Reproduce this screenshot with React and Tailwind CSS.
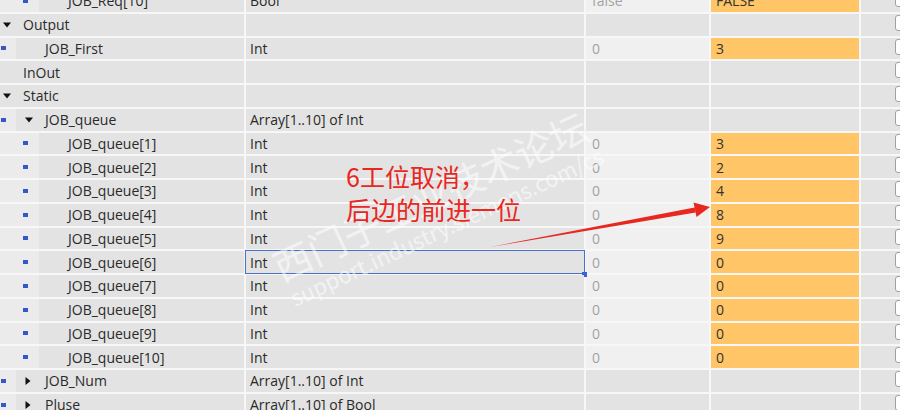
import React from 'react'

const rows = [
  { name: 'JOB_Req[10]', level: 2, type: 'Bool', def: 'false', start: 'FALSE' },
  { name: 'Output', level: 0, open: true },
  { name: 'JOB_First', level: 1, type: 'Int', def: '0', start: '3' },
  { name: 'InOut', level: 0 },
  { name: 'Static', level: 0, open: true },
  { name: 'JOB_queue', level: 1, open: true, type: 'Array[1..10] of Int' },
  ...[3, 2, 4, 8, 9, 0, 0, 0, 0, 0].map((v, i) => ({
    name: `JOB_queue[${i + 1}]`,
    level: 2,
    type: 'Int',
    def: '0',
    start: String(v),
    selected: i === 5,
  })),
  { name: 'JOB_Num', level: 1, open: false, type: 'Array[1..10] of Int' },
  { name: 'Pluse', level: 1, open: false, type: 'Array[1..10] of Bool' },
]

function Tri({ open }) {
  if (open) {
    return (
      <svg width="8" height="6" viewBox="0 0 8 6" className="shrink-0">
        <path d="M0 0.5 L8 0.5 L4 5.5 Z" fill="#111" />
      </svg>
    )
  }
  return (
    <svg width="6" height="8" viewBox="0 0 6 8" className="shrink-0">
      <path d="M0.5 0 L5.5 4 L0.5 8 Z" fill="#111" />
    </svg>
  )
}

function NameCell({ row }) {
  if (row.level === 0) {
    return (
      <div className="w-[244px] h-full bg-[#e3e3e3] flex items-center">
        <div className="w-[23px] pl-[3px] flex items-center">
          {row.open !== undefined && <Tri open={row.open} />}
        </div>
        <span>{row.name}</span>
      </div>
    )
  }
  const indent = row.level === 1 ? 'w-[16px]' : 'w-[39px]'
  const sq = row.level === 1 ? 'ml-[1px]' : 'ml-[23px]'
  return (
    <div className="w-[244px] h-full flex">
      <div className={`${indent} h-full bg-[#ebebeb] flex items-center`}>
        <div className={`${sq} w-[5px] h-[4px] bg-[#3558c8]`} />
      </div>
      <div className="flex-1 h-full bg-[#e3e3e3] flex items-center">
        <div className="w-[29px] pl-[9px] flex items-center">
          {row.open !== undefined && <Tri open={row.open} />}
        </div>
        <span>{row.name}</span>
      </div>
    </div>
  )
}

function Row({ row }) {
  const hasVal = row.def !== undefined
  return (
    <div className="flex h-[23.75px] gap-[2px] pb-[2px] bg-[#f7f7f7]">
      <NameCell row={row} />
      <div
        className={`relative w-[338px] h-full bg-[#e3e3e3] flex items-center pl-[4px] ${
          row.selected ? 'outline outline-1 outline-[#4a6fc9]' : ''
        }`}
      >
        {row.type}
        {row.selected && (
          <div className="absolute -right-[3px] -bottom-[4px] w-[5px] h-[5px] bg-[#3a62d0]" />
        )}
      </div>
      <div
        className={`w-[123px] h-full flex items-center pl-[6px] text-[#a3a3a3] ${
          hasVal ? 'bg-[#f0f0f0]' : 'bg-[#e3e3e3]'
        }`}
      >
        {row.def}
      </div>
      <div
        className={`w-[148px] h-full flex items-center pl-[5px] text-[#333] ${
          hasVal ? 'bg-[#ffc566]' : 'bg-[#e3e3e3]'
        }`}
      >
        {row.start}
      </div>
      <div className="flex-1 h-full bg-[#e3e3e3] relative">
        <div className="absolute left-[34px] top-[1px] w-[16px] h-[16px] bg-white border border-[#a0a0a0] rounded-[3px]" />
      </div>
    </div>
  )
}

export default function App() {
  return (
    <div
      className="relative w-[900px] h-[410px] overflow-hidden bg-[#f7f7f7] text-[14px] text-[#2a2a2a]"
      style={{ fontFamily: '"Open Sans", "Noto Sans", sans-serif' }}
    >
      <div className="flex flex-col -mt-[10px]">
        {rows.map((r, i) => (
          <Row key={i} row={r} />
        ))}
      </div>

      {/* watermark */}
      <div
        className="absolute left-[266px] top-[249px] origin-top-left -rotate-[25deg] flex flex-col text-white/55 pointer-events-none whitespace-nowrap"
        style={{ fontFamily: '"Noto Sans CJK SC", "Liberation Sans", sans-serif' }}
      >
        <span className="text-[38px] leading-[42px]">西门子工业技术论坛</span>
        <span className="text-[22px] leading-[26px] ml-[2px]">support.industry.siemens.com/cs</span>
      </div>

      {/* annotation */}
      <div
        className="absolute left-[346px] top-[160px] text-[25px] leading-[33px] text-[#e8271f] pointer-events-none"
        style={{ fontFamily: '"Noto Sans CJK SC", sans-serif' }}
      >
        <div>6工位取消，</div>
        <div>后边的前进一位</div>
      </div>
      <svg className="absolute left-0 top-0 pointer-events-none" width="900" height="410" viewBox="0 0 900 410">
        <polygon points="490,247 694.6,207.5 695.6,212.5" fill="#e8271f" />
        <polygon points="710,207 693.5,202.5 696.5,217" fill="#e8271f" />
      </svg>
    </div>
  )
}
